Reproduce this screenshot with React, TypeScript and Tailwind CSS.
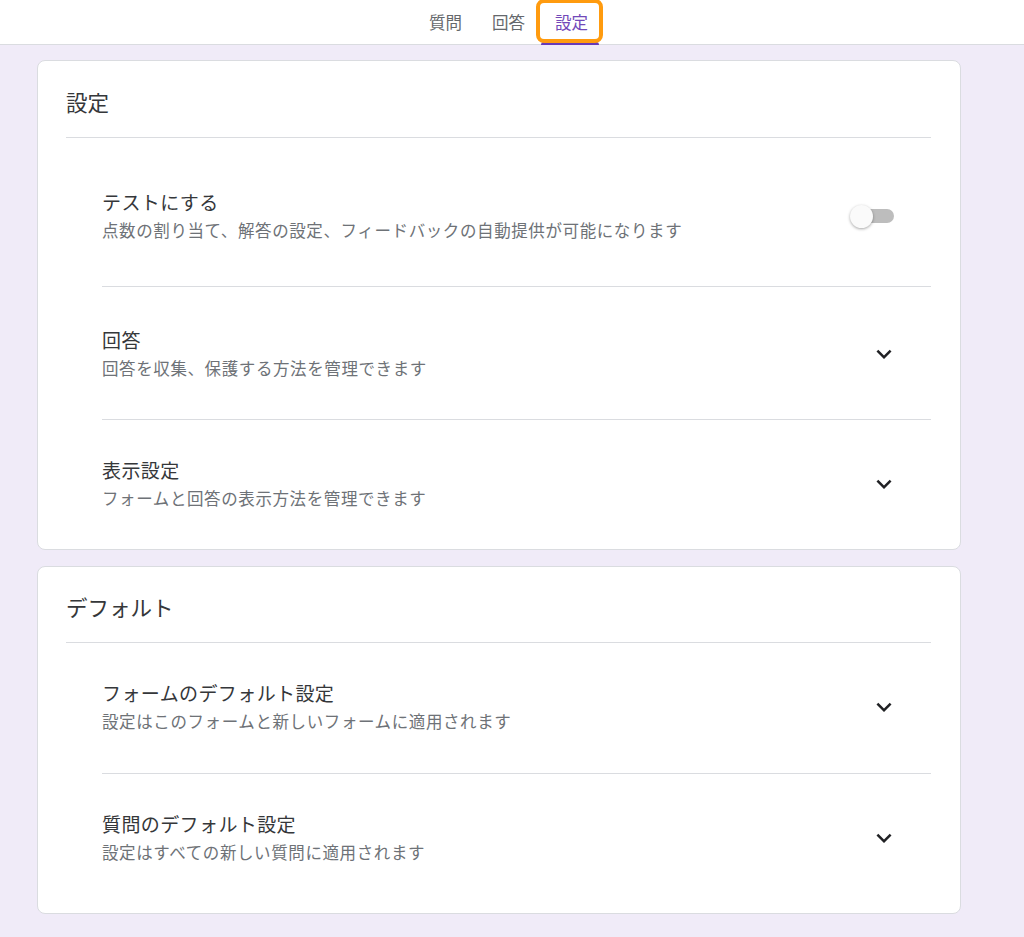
import React from "react";

const font = { fontFamily: '"Noto Sans CJK JP", "Noto Sans", Roboto, sans-serif' };

function Chevron() {
  return (
    <svg width="30" height="30" viewBox="0 0 24 24" className="text-[#202124]" fill="currentColor">
      <path d="M16.59 8.59L12 13.17 7.41 8.59 6 10l6 6 6-6z" />
    </svg>
  );
}

function Toggle() {
  return (
    <div className="relative w-[46px] h-[24px] flex items-center">
      <div className="absolute left-[4px] w-[40px] h-[14px] rounded-full bg-[#bdbdbd]" />
      <div className="absolute left-0 w-[23px] h-[23px] rounded-full bg-[#fafafa] shadow-[0_1px_3px_rgba(0,0,0,0.35)]" />
    </div>
  );
}

type RowProps = {
  title: string;
  sub: string;
  right: React.ReactNode;
  pt: string;
  pb: string;
  divider?: boolean;
};

function Row({ title, sub, right, pt, pb, divider }: RowProps) {
  return (
    <div className={`ml-[36px] flex items-center ${pt} ${pb} ${divider ? "border-b border-[#dadce0]" : ""}`}>
      <div className="flex-1 flex flex-col">
        <div className="text-[19px] leading-[24px] tracking-[0.4px] text-[#35373a]">{title}</div>
        <div className="mt-[4px] text-[16.5px] leading-[24px] tracking-[0.6px] text-[#6e7277]">{sub}</div>
      </div>
      <div className="flex items-center">{right}</div>
    </div>
  );
}

export default function App() {
  return (
    <div className="min-h-[937px] bg-[#f0ebf8]" style={font}>
      <header className="relative h-[45px] bg-white border-b border-[#dadce0] flex items-stretch pl-[414px]">
        <div className="px-[15px] flex items-center text-[16.5px] text-[#65686c]">質問</div>
        <div className="px-[15px] flex items-center text-[16.5px] text-[#65686c]">回答</div>
        <div className="relative px-[15px] flex items-center text-[16.5px] text-[#7248b9]">
          設定
          <div className="absolute left-[1px] right-[4px] bottom-[-1px] h-[3px] bg-[#673ab7] rounded-t-[3px]" />
        </div>
        <div className="absolute left-[536px] top-[-1px] w-[67px] h-[44px] border-[4px] border-[#ff9b0f] rounded-[8px]" />
      </header>

      <main className="pl-[37px] pt-[15px] pb-[24px] flex flex-col gap-[16px]">
        <section className="w-[924px] bg-white rounded-[8px] border border-[#dadce0] pl-[28px] pr-[29px]">
          <div className="pt-[28px] pb-[22px] border-b border-[#dadce0] text-[21.5px] leading-[26px] text-[#35373a]">
            設定
          </div>
          <Row
            title="テストにする"
            sub="点数の割り当て、解答の設定、フィードバックの自動提供が可能になります"
            right={<div className="mr-[35px]"><Toggle /></div>}
            pt="pt-[52px]"
            pb="pb-[44px]"
            divider
          />
          <Row
            title="回答"
            sub="回答を収集、保護する方法を管理できます"
            right={<div className="mr-[32px]"><Chevron /></div>}
            pt="pt-[41px]"
            pb="pb-[39px]"
            divider
          />
          <Row
            title="表示設定"
            sub="フォームと回答の表示方法を管理できます"
            right={<div className="mr-[32px]"><Chevron /></div>}
            pt="pt-[38px]"
            pb="pb-[39px]"
          />
        </section>

        <section className="w-[924px] bg-white rounded-[8px] border border-[#dadce0] pl-[28px] pr-[29px]">
          <div className="pt-[27px] pb-[22px] border-b border-[#dadce0] text-[21.5px] leading-[26px] text-[#35373a]">
            デフォルト
          </div>
          <Row
            title="フォームのデフォルト設定"
            sub="設定はこのフォームと新しいフォームに適用されます"
            right={<div className="mr-[32px]"><Chevron /></div>}
            pt="pt-[38px]"
            pb="pb-[40px]"
            divider
          />
          <Row
            title="質問のデフォルト設定"
            sub="設定はすべての新しい質問に適用されます"
            right={<div className="mr-[32px]"><Chevron /></div>}
            pt="pt-[38px]"
            pb="pb-[49px]"
          />
        </section>
      </main>
    </div>
  );
}
